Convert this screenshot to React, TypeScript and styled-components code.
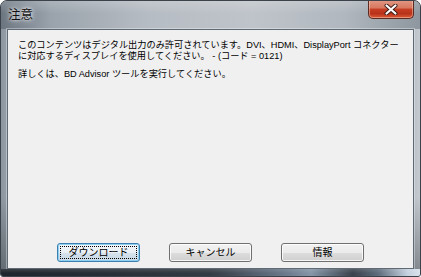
import React from "react";
import styled, { createGlobalStyle } from "styled-components";

const GlobalStyle = createGlobalStyle`
  html, body { margin: 0; padding: 0; background: #ffffff; }
  body { font-family: "Liberation Sans", "Noto Sans CJK JP", sans-serif; }
`;

const Window = styled.div`
  width: 421px;
  height: 277px;
  box-sizing: border-box;
  display: flex;
  flex-direction: column;
  border: 1px solid #3b424a;
  border-radius: 7px 7px 3px 3px;
  overflow: hidden;
  background: #9aa2ab;
`;

const TitleBar = styled.div`
  height: 28px;
  flex: none;
  display: flex;
  justify-content: space-between;
  align-items: flex-start;
  padding-left: 7px;
  background:
    linear-gradient(180deg, rgba(255,255,255,0.18) 0%, rgba(255,255,255,0) 45%),
    linear-gradient(90deg, #6b7580 0%, #9aa3ac 12%, #b6bcc3 35%, #bfc4ca 60%, #b0b7be 82%, #8e979f 100%);
`;

const Title = styled.div`
  margin-top: 5px;
  font-family: "Noto Sans CJK JP", sans-serif;
  font-size: 12.5px;
  line-height: 16px;
  color: #111;
  text-shadow: 0 0 6px rgba(255,255,255,0.9), 0 0 3px rgba(255,255,255,0.9);
`;

const CloseButton = styled.div`
  width: 46px;
  height: 19px;
  margin-right: 6px;
  margin-top: -1px;
  box-sizing: border-box;
  border: 1px solid #5b2a22;
  border-top: none;
  border-radius: 0 0 5px 5px;
  display: flex;
  align-items: center;
  justify-content: center;
  background:
    linear-gradient(180deg, #e29a86 0%, #d7765e 45%, #c73f24 50%, #b8321a 75%, #d95a36 100%);
  box-shadow: inset 0 0 0 1px rgba(255,220,200,0.45);
`;

const Middle = styled.div`
  flex: 1;
  display: flex;
  padding: 0 6px 0 6px;
  background:
    linear-gradient(180deg, rgba(0,0,0,0) 0%, rgba(0,0,0,0) 70%, rgba(20,26,32,0.35) 100%),
    linear-gradient(90deg, #8d969f 0%, #9ea6ae 3%, #b0b7be 97%, #c4cad0 100%);
`;

const Client = styled.div`
  flex: 1;
  display: flex;
  flex-direction: column;
  background: #f0f0f0;
  border: 1px solid #5f6a75;
  box-shadow: 0 0 0 1px rgba(255,255,255,0.35);
  padding: 10px 8px 6px 10px;
`;

const Message = styled.div`
  flex: 1;
  font-size: 9.2px;
  line-height: 10.5px;
  color: #000;
`;

const Para = styled.p`
  margin: 0 0 7.5px 0;
`;

const ButtonRow = styled.div`
  display: flex;
  gap: 29px;
  padding-left: 39px;
`;

const Button = styled.div<{ $default?: boolean }>`
  width: 83px;
  height: 19px;
  box-sizing: border-box;
  border-radius: 3px;
  border: 1px solid ${(p) => (p.$default ? "#3c7fb1" : "#707070")};
  background: ${(p) =>
    p.$default
      ? "linear-gradient(180deg, #f4f8fb 0%, #e8eef3 50%, #d6e2ec 51%, #c8d8e6 100%)"
      : "linear-gradient(180deg, #f2f2f2 0%, #ebebeb 50%, #dddddd 51%, #cfcfcf 100%)"};
  box-shadow: inset 0 0 0 1px ${(p) => (p.$default ? "#8fd0f0" : "rgba(255,255,255,0.8)")};
  display: flex;
  align-items: center;
  justify-content: center;
  padding: 2px;
`;

const Focus = styled.span<{ $on?: boolean }>`
  flex: 1;
  align-self: stretch;
  display: flex;
  align-items: center;
  justify-content: center;
  font-size: 10px;
  line-height: 12px;
  color: #000;
  outline: ${(p) => (p.$on ? "1px dotted #000" : "none")};
  outline-offset: -1px;
`;

const BottomFrame = styled.div`
  height: 7px;
  flex: none;
  background:
    linear-gradient(180deg, rgba(255,255,255,0.12) 0%, rgba(0,0,0,0) 60%),
    linear-gradient(90deg, #1f252c 0%, #2a3139 30%, #333b44 50%, #6b7a8c 68%, #8596a8 74%, #3a434d 84%, #5e6c7c 90%, #c4d1de 97%, #d8e2ec 100%);
`;

function CloseIcon() {
  return (
    <svg width="14" height="11" viewBox="0 0 14 11">
      <path d="M2.5 1.5 L11.5 9.5 M11.5 1.5 L2.5 9.5" stroke="#3a1a14" strokeWidth="4" strokeLinecap="round" />
      <path d="M2.5 1.5 L11.5 9.5 M11.5 1.5 L2.5 9.5" stroke="#ffffff" strokeWidth="2.2" strokeLinecap="round" />
    </svg>
  );
}

export default function App() {
  return (
    <>
      <GlobalStyle />
      <Window>
        <TitleBar>
          <Title>注意</Title>
          <CloseButton>
            <CloseIcon />
          </CloseButton>
        </TitleBar>
        <Middle>
          <Client>
            <Message>
              <Para>
                このコンテンツはデジタル出力のみ許可されています。DVI、HDMI、DisplayPort コネクター
                <br />
                に対応するディスプレイを使用してください。 - (コード = 0121)
              </Para>
              <Para>詳しくは、BD Advisor ツールを実行してください。</Para>
            </Message>
            <ButtonRow>
              <Button $default>
                <Focus $on>ダウンロード</Focus>
              </Button>
              <Button>
                <Focus>キャンセル</Focus>
              </Button>
              <Button>
                <Focus>情報</Focus>
              </Button>
            </ButtonRow>
          </Client>
        </Middle>
        <BottomFrame />
      </Window>
    </>
  );
}
